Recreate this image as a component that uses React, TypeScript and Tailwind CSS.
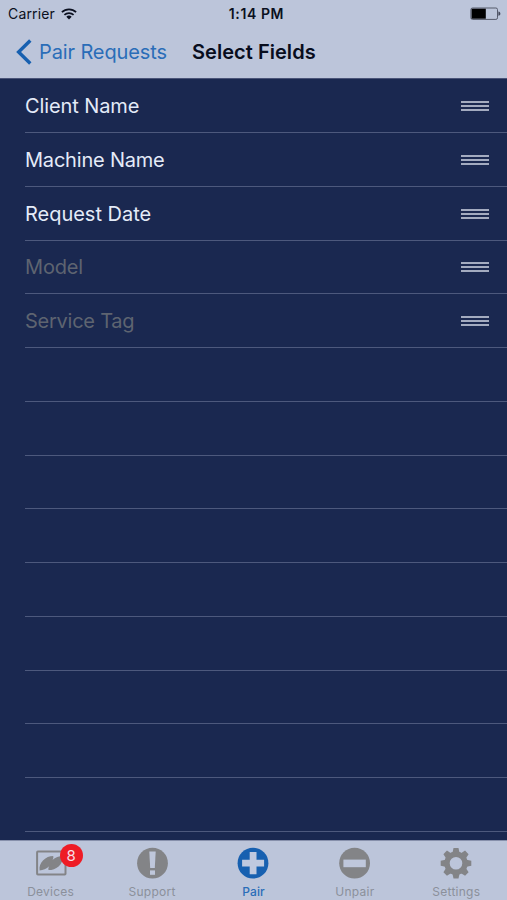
import React from 'react';

const fields = [
  { label: 'Client Name', enabled: true, tracking: 'tracking-[-0.1px]' },
  { label: 'Machine Name', enabled: true, tracking: 'tracking-[-0.2px]' },
  { label: 'Request Date', enabled: true, tracking: 'tracking-[-0.02px]' },
  { label: 'Model', enabled: false, tracking: 'tracking-[-0.15px]' },
  { label: 'Service Tag', enabled: false, tracking: 'tracking-[-0.25px]' },
];

const EMPTY_ROWS = 9;

const WifiIcon = () => (
  <svg width="16" height="12" viewBox="0 0 16 12" fill="none" stroke="#0b1020" strokeWidth="1.7">
    <path d="M0.9 4.2a10.2 10.2 0 0 1 14.2 0" />
    <path d="M3.4 6.9a6.6 6.6 0 0 1 9.2 0" />
    <path d="M8 11.4 5.3 8.8a3.9 3.9 0 0 1 5.4 0z" fill="#0b1020" stroke="none" />
  </svg>
);

const BatteryIcon = () => (
  <svg width="31" height="14" viewBox="0 0 31 14">
    <rect x="0.9" y="1" width="26.6" height="11.4" rx="1.6" fill="none" stroke="#555a6b" strokeWidth="1" />
    <rect x="1.6" y="1.7" width="14.2" height="10" fill="#000" />
    <path d="M28.4 4.6c1.3.2 2 1.1 2 2.1s-.7 1.9-2 2.1z" fill="#454a5c" />
  </svg>
);

const DevicesIcon = () => (
  <svg width="32" height="32" viewBox="0 0 32 32">
    <rect x="2.1" y="4.6" width="28.4" height="23" rx="0.8" fill="none" stroke="#838487" strokeWidth="2" />
    <path
      d="M4.6 23.4C4 19.600 5.400 15.800 8.200 13.200 11 10.600 14.400 9 18.200 9c.4 1.300.1 2.600-.7 4C20.300 10.600 24 9 28 8.800c.3 4-1.300 8-4.400 10.600-2.900 2.400-6.300 3.700-10 3.700-.5-1.200-.2-2.500.6-3.900C11.400 21.700 8.100 23.200 4.600 23.400z"
      fill="#838487"
    />
  </svg>
);

const SupportIcon = () => (
  <svg width="32" height="32" viewBox="0 0 32 32">
    <circle cx="16.5" cy="16.2" r="15.4" fill="#838487" />
    <path d="M13.3 4.6h6.4l-.9 16.400h-4.600z" fill="#bfc7db" />
    <rect x="14" y="23.4" width="5" height="4.4" fill="#bfc7db" />
  </svg>
);

const PairIcon = () => (
  <svg width="32" height="32" viewBox="0 0 32 32">
    <circle cx="16" cy="16.2" r="15.4" fill="#1760b0" />
    <path d="M12.7 5.1h6.800v7.700h7.600v6.800h-7.600v7.600h-6.800v-7.600H5.100v-6.800h7.600z" fill="#bfc9df" />
  </svg>
);

const UnpairIcon = () => (
  <svg width="32" height="32" viewBox="0 0 32 32">
    <circle cx="15.6" cy="16.2" r="15.4" fill="#838487" />
    <rect x="4.4" y="12.6" width="22.4" height="7.6" fill="#bfc7db" />
  </svg>
);

const SettingsIcon = () => (
  <svg width="32" height="32" viewBox="0 0 32 32" fill="#838487">
    {[0, 45, 90, 135, 180, 225, 270, 315].map((angle) => (
      <path key={angle} d="M13.500.9h5l1.300 6h-7.600z" transform={`rotate(${angle} 16 16.2)`} />
    ))}
    <circle cx="16" cy="16.2" r="9" fill="none" stroke="#838487" strokeWidth="5.4" />
  </svg>
);

const tabs = [
  { label: 'Devices', icon: <DevicesIcon />, badge: 8 },
  { label: 'Support', icon: <SupportIcon /> },
  { label: 'Pair', icon: <PairIcon />, active: true },
  { label: 'Unpair', icon: <UnpairIcon /> },
  { label: 'Settings', icon: <SettingsIcon /> },
];

const DragHandle = () => (
  <div className="flex w-7 flex-col gap-[2px]">
    <div className="h-[2px] bg-[#a3abc0]" />
    <div className="h-[2px] bg-[#a3abc0]" />
    <div className="h-[2px] bg-[#a3abc0]" />
  </div>
);

const App = () => {
  return (
    <div className="flex h-[900px] w-[507px] flex-col overflow-hidden bg-[#1a2850] font-['Inter','Liberation_Sans',sans-serif]">
      <header className="h-[79px] shrink-0 border-b border-[#4a5478] bg-[#bcc5da]">
        {/* Status bar */}
        <div className="grid h-[27px] grid-cols-3 items-center pl-2 pr-[6px] text-[#0b1020]">
          <div className="flex items-center gap-[6px]">
            <span className="text-[14px] leading-none tracking-[0.15px]">Carrier</span>
            <WifiIcon />
          </div>
          <span className="pl-1 text-center text-[14px] font-semibold leading-none tracking-[0.6px]">1:14 PM</span>
          <div className="flex justify-end">
            <BatteryIcon />
          </div>
        </div>

        {/* Navigation bar */}
        <div className="flex h-[50px] items-center pl-4">
          <button className="flex w-44 items-center gap-[7px] whitespace-nowrap text-[#2a6db8]">
            <svg width="16" height="26" viewBox="0 0 16 26" fill="none" stroke="#1760b0" strokeWidth="3.4">
              <path d="M14.300 1.500 2.600 13l11.700 11.500" />
            </svg>
            <span className="text-[20px] leading-none tracking-[-0.12px]">Pair Requests</span>
          </button>
          <h1 className="whitespace-nowrap text-[20px] font-semibold leading-none tracking-[0.04px] text-[#080d1d]">
            Select Fields
          </h1>
        </div>
      </header>

      {/* Field list */}
      <main className="min-h-0 flex-1 pl-[25px] pt-[0.3px]">
        {fields.map((field) => (
          <div
            key={field.label}
            className="flex h-[53.75px] items-center justify-between border-b border-[#4d597d] pr-[18px] pt-[1px]"
          >
            <span
              className={`text-[20px] leading-none ${field.tracking} ${
                field.enabled ? 'text-[#e4ebf8]' : 'text-[#5e6470]'
              }`}
            >
              {field.label}
            </span>
            <DragHandle />
          </div>
        ))}
        {Array.from({ length: EMPTY_ROWS }).map((_, i) => (
          <div key={i} className="h-[53.75px] border-b border-[#4d597d]" />
        ))}
      </main>

      <nav className="grid h-[60px] shrink-0 grid-cols-5 border-t border-[#8790ab] bg-[#bcc5da]">
        {tabs.map((tab) => (
          <div key={tab.label} className="flex flex-col items-center pt-[6px]">
            <div className="relative">
              {tab.icon}
              {tab.badge && (
                <span className="absolute left-[25px] top-[-3px] flex h-[23px] w-[23px] items-center justify-center rounded-full bg-[#ee1c25] text-[15px] leading-none text-[#f6dfe6]">
                  {tab.badge}
                </span>
              )}
            </div>
            <span
              className={`mt-[7px] text-[12px] leading-none ${
                tab.active ? 'font-medium tracking-[0.1px] text-[#2a6db8]' : 'tracking-[0.25px] text-[#8b909b]'
              }`}
            >
              {tab.label}
            </span>
          </div>
        ))}
      </nav>
    </div>
  );
};

export default App;
